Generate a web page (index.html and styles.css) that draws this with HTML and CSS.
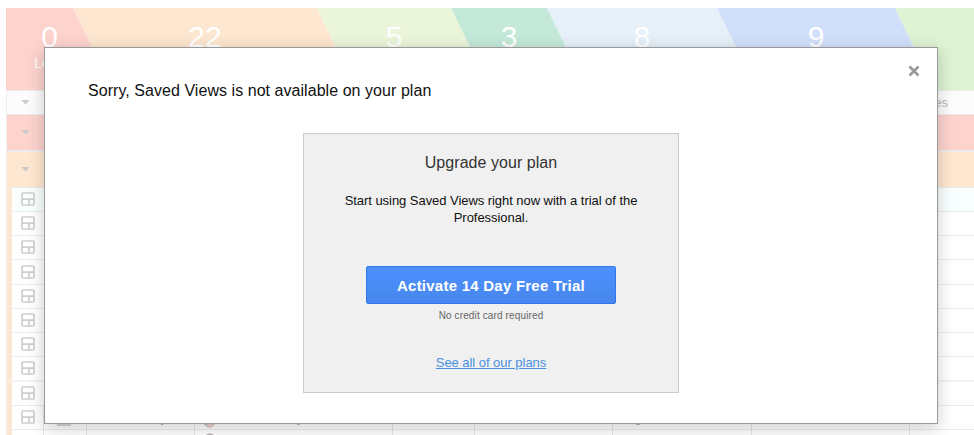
FILE: index.html
```html
<!doctype html>
<html>

<head>
    <meta charset="utf-8">
    <title>Saved Views</title>
    <link rel="stylesheet" href="styles.css">
</head>
<body>
    <svg class="defs">
        <symbol id="box" viewBox="0 0 14 14">
            <rect x="1" y="1" width="12" height="12" rx="1" />
            <path d="M1 7.2h12M8 7.2v6" />
        </symbol>
    </svg>
    <div class="page">
        <div class="stages">
            <div class="stage lead"><b>0</b><span>Lead</span></div>
            <div class="stage contacted"><b>22</b></div>
            <div class="stage pitched"><b>5</b></div>
            <div class="stage demo"><b>3</b></div>
            <div class="stage trial"><b>8</b></div>
            <div class="stage closing"><b>9</b></div>
            <div class="stage won"></div>
        </div>
        <div class="grid">
            <div class="row columns"><i class="arrow"></i><span class="colname">Dates</span></div>
            <div class="row group red"><i class="arrow"></i></div>
            <div class="row group orange"><i class="arrow"></i></div>
            <div class="row item first"><svg class="icon"><use href="#box" /></svg></div>
            <div class="row item"><svg class="icon"><use href="#box" /></svg></div>
            <div class="row item"><svg class="icon"><use href="#box" /></svg></div>
            <div class="row item tall"><svg class="icon"><use href="#box" /></svg></div>
            <div class="row item"><svg class="icon"><use href="#box" /></svg></div>
            <div class="row item"><svg class="icon"><use href="#box" /></svg></div>
            <div class="row item"><svg class="icon"><use href="#box" /></svg></div>
            <div class="row item"><svg class="icon"><use href="#box" /></svg></div>
            <div class="row item tall thick"><svg class="icon"><use href="#box" /></svg></div>
            <div class="row item cells">
                <div class="cell"><svg class="icon"><use href="#box" /></svg></div>
                <div class="cell"><i class="tag"></i></div>
                <div class="cell name">Key</div>
                <div class="cell person">
                    <svg class="avatar" viewBox="0 0 18 20"><path d="M1 14c2-4 12-5 16 1l-3 1c-2 5-8 5-10 1z" fill="#e9cfcf" /><path d="M1 14l4 4 5-4z" fill="#c4c4c4" /></svg>
                    Jay
                </div>
                <div class="cell"></div>
                <div class="cell"></div>
                <div class="cell stagename">ng</div>
                <div class="cell"></div>
                <div class="cell"></div>
            </div>
            <div class="row item cells">
                <div class="cell"></div>
                <div class="cell"></div>
                <div class="cell"></div>
                <div class="cell person">
                    <svg class="avatar" viewBox="0 0 18 20"><circle cx="9" cy="6" r="4.5" fill="#f6e3dc" /><path d="M4 6c0-6 10-6 10 0-2-3-7-3-10 0z" fill="#b9b4b4" /></svg>
                </div>
                <div class="cell"></div>
                <div class="cell"></div>
                <div class="cell"></div>
                <div class="cell"></div>
                <div class="cell"></div>
            </div>
        </div>
    </div>

    <div class="modal">
        <svg class="close" viewBox="0 0 12 12"><path d="M1.5 1.5l9 9M10.5 1.5l-9 9" /></svg>
        <div class="title">Sorry, Saved Views is not available on your plan</div>
        <div class="upgrade">
            <div class="heading">Upgrade your plan</div>
            <p class="text">Start using Saved Views right now with a trial of the<br>Professional.</p>
            <button class="activate">Activate 14 Day Free Trial</button>
            <div class="note">No credit card required</div>
            <a class="plans" href="#">See all of our plans</a>
        </div>
    </div>
</body>

</html>
```

FILE: styles.css
```css
* {
    box-sizing: border-box;
}

body {
    margin: 0;
    height: 435px;
    overflow: hidden;
    background: #fff;
    font-family: "Liberation Sans", Arial, sans-serif;
    font-size: 13px;
}

.defs {
    display: none;
}

.page {
    height: 435px;
    padding: 8px 0 0 6px;
    overflow: hidden;
}

/* pipeline header */
.stages {
    display: flex;
    height: 82px;
}

.stage {
    flex: none;
    margin-right: -20px;
    padding-top: 12px;
    text-align: center;
    color: #fff;
    clip-path: polygon(0 0, calc(100% - 20px) 0, 100% 50%, calc(100% - 20px) 100%, 0 100%, 20px 50%);
}

.stage b {
    display: block;
    font-size: 30px;
    line-height: 34px;
    font-weight: normal;
}

.stage span {
    display: block;
    font-size: 14px;
    line-height: 18px;
}

.lead {
    width: 87px;
    background: #fdd3ce;
    clip-path: polygon(0 0, calc(100% - 20px) 0, 100% 50%, calc(100% - 20px) 100%, 0 100%);
}

.contacted {
    width: 264px;
    background: #fee7d0;
}

.pitched {
    width: 154px;
    background: #eaf5da;
}

.demo {
    width: 116px;
    background: #c4e9d8;
}

.trial {
    width: 190px;
    background: #e5f0f9;
}

.closing {
    width: 198px;
    background: #d1e0fa;
}

.won {
    width: 120px;
    background: #def3d3;
}

/* grid */
.grid {
    border-left: 1px solid #efefef;
}

.row {
    display: flex;
    align-items: center;
    height: 24px;
    border-top: 1px solid #ececec;
    padding-left: 14px;
}

.columns {
    background: #fcfcfc;
}

.colname {
    margin-left: 884px;
    color: #b5b5b5;
}

.arrow {
    flex: none;
    width: 9px;
    height: 5px;
    margin-top: -1px;
    background: #cacaca;
    clip-path: polygon(0 0, 100% 0, 50% 100%);
}

.group {
    height: 36px;
}

.red {
    background: #fdd3ce;
}

.orange {
    height: 37px;
    border-top-width: 2px;
    background: #fee7d0;
}

.item {
    border-left: 5px solid #fee7d0;
    padding-left: 9px;
}

.first {
    background: #f9feff;
}

.tall {
    height: 25px;
}

.thick {
    border-top: 2px solid #f3f3f3;
}

.icon {
    flex: none;
    width: 14px;
    height: 14px;
    margin-top: -1px;
    fill: none;
    stroke: #cfcfcf;
    stroke-width: 1.7;
}

.cells {
    display: grid;
    grid-template-columns: 32px 43px 108px 198px 82px 138px 139px 158px 1fr;
    align-items: stretch;
    padding-left: 0;
}

.cell {
    display: flex;
    align-items: center;
    border-right: 1px solid #e6e6e6;
    color: #aaa;
    line-height: 23px;
    overflow: hidden;
}

.cell:first-child {
    padding-left: 9px;
}

.cell:last-child {
    border-right: none;
}

.tag {
    width: 14px;
    height: 14px;
    margin: 0 0 -2px 13px;
    background: #d8d8d8;
}

.name {
    justify-content: flex-end;
    padding-right: 27px;
}

.person {
    padding-left: 6px;
    gap: 64px;
}

.avatar {
    width: 18px;
    height: 22px;
}

.stagename {
    padding-left: 14px;
}

/* dialog */
.modal {
    position: absolute;
    left: 44px;
    top: 47px;
    width: 894px;
    height: 377px;
    padding: 33px 43px 0;
    background: #fff;
    border: 1px solid #999;
    box-shadow: 0 4px 16px rgba(0, 0, 0, .2);
}

.close {
    position: absolute;
    top: 17px;
    right: 17px;
    width: 12px;
    height: 12px;
    fill: none;
    stroke: #999;
    stroke-width: 2.6;
}

.title {
    font-size: 16px;
    line-height: 20px;
    letter-spacing: .05px;
    color: #111;
}

.upgrade {
    width: 376px;
    height: 260px;
    margin: 32px 0 0 215px;
    padding-top: 19px;
    background: #f0f0f0;
    border: 1px solid #ccc;
    text-align: center;
}

.heading {
    font-size: 16px;
    line-height: 20px;
    letter-spacing: .05px;
    color: #333;
}

.text {
    margin: 19px 0 0;
    line-height: 17px;
    letter-spacing: -.05px;
    color: #111;
}

.activate {
    display: block;
    width: 250px;
    height: 38px;
    margin: 40px auto 0;
    padding: 0;
    border: 1px solid #3079ed;
    border-radius: 2px;
    background: linear-gradient(#4d90fe, #4787ed);
    color: #fff;
    font-family: inherit;
    font-size: 15px;
    font-weight: bold;
    letter-spacing: .24px;
}

.note {
    margin-top: 5px;
    font-size: 10px;
    line-height: 14px;
    letter-spacing: .13px;
    color: #666;
}

.plans {
    display: block;
    margin-top: 32px;
    line-height: 16px;
    letter-spacing: -.04px;
    color: #4a90e2;
    text-decoration: underline;
}
```
